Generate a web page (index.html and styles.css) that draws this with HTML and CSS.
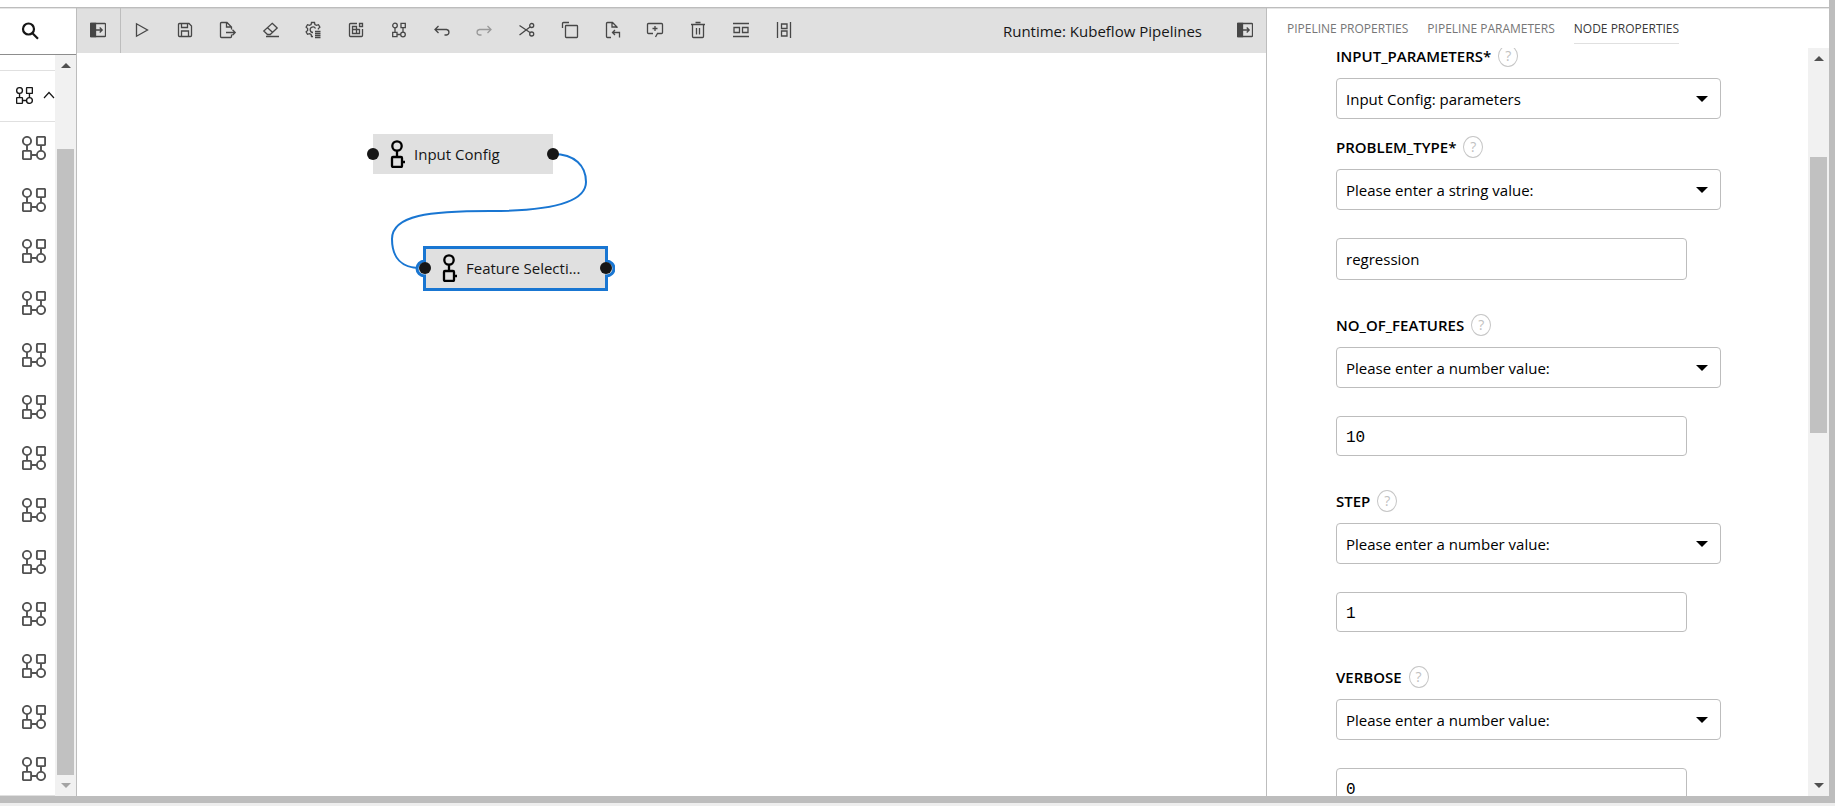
FILE: index.html
```html
<!DOCTYPE html>
<html lang="en">
<head>
<meta charset="utf-8">
<title>Pipeline Editor</title>
<link rel="stylesheet" href="styles.css">
</head>
<body>
<svg class="defs" aria-hidden="true">
  <symbol id="flow" viewBox="0 0 24 24"><g fill="none" stroke="currentColor" stroke-width="1.9"><circle cx="5" cy="5" r="4.1"/><rect x="14.9" y="0.9" width="8.2" height="8.2" rx="0.8"/><rect x="0.9" y="14.9" width="8.2" height="8.2" rx="0.8"/><circle cx="19" cy="19" r="4.1"/><path d="M5 9v6M19 9v6M9 19h6"/></g></symbol>
  <symbol id="panel" viewBox="0 0 16 16"><rect x="0.5" y="1.5" width="15" height="13" rx="0.8" fill="none" stroke="currentColor" stroke-width="1.300"/><path d="M0.5 1.5h5v13h-5z" fill="currentColor"/><path d="M5 8h7M9.7 5.5L12.2 8l-2.500 2.500" fill="none" stroke="currentColor" stroke-width="1.300"/></symbol>
  <symbol id="node-op" viewBox="0 0 16 28"><g fill="none" stroke="currentColor" stroke-width="2.300"><circle cx="7" cy="6" r="4.700"/><path d="M7 11v6M12 22h3"/><rect x="2" y="17" width="10" height="10" rx="1"/></g></symbol>
</svg>
<div class="app">
  <div class="workspace">
    <aside class="palette">
      <button class="search" aria-label="Search"><svg width="18" height="18" viewBox="0 0 18 18" fill="none" stroke="currentColor" stroke-width="2.200"><circle cx="7.500" cy="7" r="5.500"/><path d="M11.500 11.200L17 16.700"/></svg></button>
      <div class="palette-body">
        <div class="palette-list">
          <button class="category" aria-label="Category"><svg width="17" height="17"><use href="#flow"/></svg><svg class="caret" width="12" height="8" viewBox="0 0 12 8" fill="none" stroke="currentColor" stroke-width="1.200"><path d="M1 7l5-5.500L11 7"/></svg></button>
          <ul class="ops">
            <li><svg><use href="#flow"/></svg></li><li><svg><use href="#flow"/></svg></li><li><svg><use href="#flow"/></svg></li><li><svg><use href="#flow"/></svg></li><li><svg><use href="#flow"/></svg></li><li><svg><use href="#flow"/></svg></li><li><svg><use href="#flow"/></svg></li><li><svg><use href="#flow"/></svg></li><li><svg><use href="#flow"/></svg></li><li><svg><use href="#flow"/></svg></li><li><svg><use href="#flow"/></svg></li><li><svg><use href="#flow"/></svg></li><li><svg><use href="#flow"/></svg></li>
          </ul>
        </div>
        <div class="scrollbar"><i class="up"></i><div class="track"><div class="thumb thumb-left"></div></div><i class="down muted"></i></div>
      </div>
    </aside>
    <main class="editor">
      <div class="toolbar">
        <button class="tool toggle" aria-label="Toggle palette"><svg><use href="#panel"/></svg></button>
        <div class="tools">
          <button class="tool" aria-label="Run"><svg viewBox="0 0 16 16"><path d="M2.500 1.800v12.400L13.500 8z"/></svg></button>
          <button class="tool" aria-label="Save"><svg viewBox="0 0 16 16"><path d="M1.500 2.500a1 1 0 0 1 1-1h9.500l2.500 2.500v9.500a1 1 0 0 1-1 1h-11a1 1 0 0 1-1-1zM4.500 1.500v4h6v-4M4.500 14.500v-5.500h7v5.500"/></svg></button>
          <button class="tool" aria-label="Export"><svg viewBox="0 0 16 16"><path d="M11.500 12.500v2a1 1 0 0 1-1 1h-9a1 1 0 0 1-1-1v-13a1 1 0 0 1 1-1h5.500l4.500 4.500v2.500M6.500 0.500v4.500h5M6 10.500h9M12.500 7.800l2.700 2.700-2.700 2.700"/></svg></button>
          <button class="tool" aria-label="Clear"><svg viewBox="0 0 16 16"><path d="M3 14.500h13M9.200 1.300l5 4.700-7 6.500H4.500L0.800 9zM4.500 5.700l5 4.600"/></svg></button>
          <button class="tool" aria-label="Runtimes"><svg viewBox="0 0 16 16"><path d="M10 9.500h5.500M10 11.500h5.500M10 13.500h5.500M10 15.500h5.500"/><path d="M8 14.500H6.500l-.4-2-1.600-.9-2 .7-1.400-2.500 1.500-1.400V6.600L1.100 5.200l1.400-2.500 2 .7 1.600-.9.400-2h3l.4 2 1.600.9 2-.7 1.400 2.500-1.500 1.400v.9M8 10.500A2.800 2.800 0 1 1 10.500 6.500"/></svg></button>
          <button class="tool" aria-label="Runtime images"><svg viewBox="0 0 16 16"><path d="M9 1.500H2.500a1 1 0 0 0-1 1v11a1 1 0 0 0 1 1h11a1 1 0 0 0 1-1V7M11.500 1.500h3v3h-3zM4.500 4.500h4v7h-4zM4.500 7.500h7v4h-7z"/></svg></button>
          <button class="tool" aria-label="Component catalogs"><svg viewBox="0 0 16 16"><circle cx="4" cy="3.500" r="2.300"/><path d="M10 1.300h4.300v4.300H10zM1.700 10.400h4.300v4.300H1.700zM4 5.700v4.700M12 5.700v4.700M6 12.500h3.700"/><circle cx="12" cy="12.500" r="2.300"/></svg></button>
          <button class="tool" aria-label="Undo"><svg viewBox="0 0 16 16"><path d="M4.500 4L1 7.500 4.500 11M1 7.500h11.500a3 2.800 0 0 1 0 5.500h-2"/></svg></button>
          <button class="tool" aria-label="Redo" disabled><svg viewBox="0 0 16 16"><path d="M11.500 4L15 7.500 11.500 11M15 7.500H3.500a3 2.800 0 0 0 0 5.500h2"/></svg></button>
          <button class="tool" aria-label="Cut"><svg viewBox="0 0 16 16"><path d="M0.500 3.500L11 10.500M0.500 13L11 5"/><circle cx="12.700" cy="3.500" r="2"/><circle cx="12.700" cy="12" r="2"/></svg></button>
          <button class="tool" aria-label="Copy"><svg viewBox="0 0 16 16"><path d="M0.500 6V1.500a1 1 0 0 1 1-1H7"/><rect x="3.500" y="3.500" width="12" height="12" rx="0.800"/></svg></button>
          <button class="tool" aria-label="Paste"><svg viewBox="0 0 16 16"><path d="M6 15.500H2.500a1 1 0 0 1-1-1v-13a1 1 0 0 1 1-1h5l4.500 4.500v1M7 0.500v4.500h5M10 8L7.500 10.500 10 13M7.500 10.500h7v5"/></svg></button>
          <button class="tool" aria-label="Comment"><svg viewBox="0 0 16 16"><path d="M8.500 15l2-3.500h4a1 1 0 0 0 1-1v-8a1 1 0 0 0-1-1h-13a1 1 0 0 0-1 1v8a1 1 0 0 0 1 1H6M8 4v5M5.500 6.500h5"/></svg></button>
          <button class="tool" aria-label="Delete"><svg viewBox="0 0 16 16"><path d="M1 2.500h14M5.500 0.500h5M2.500 2.500v12a1 1 0 0 0 1 1h9a1 1 0 0 0 1-1v-12M6.500 6v6.500M9.500 6v6.500"/></svg></button>
          <button class="tool" aria-label="Arrange horizontally"><svg viewBox="0 0 16 16"><path d="M0 1.500h16M0 14.500h16M1 5.500h5.500v5H1zM9.500 5.500H15v5H9.500z"/></svg></button>
          <button class="tool" aria-label="Arrange vertically"><svg viewBox="0 0 16 16"><path d="M1.500 0v16M14.500 0v16M5.500 2h5.500v4.500H5.500zM5.500 9h5.500v5H5.500z"/></svg></button>
        </div>
        <span class="runtime">Runtime: Kubeflow Pipelines</span>
        <button class="tool" aria-label="Toggle properties"><svg><use href="#panel"/></svg></button>
      </div>
      <div class="canvas">
        <svg class="edges" aria-hidden="true"><path d="M476 101C498 101 509 113 509 129C509 152 463 158 413 158C353 158 315 162 315 186C315 205 325 215 343 215"/></svg>
        <div class="node node-input">
          <i class="port port-in"></i><svg class="node-icon"><use href="#node-op"/></svg><span>Input Config</span><i class="port port-out"></i>
        </div>
        <div class="node node-feature">
          <svg class="frame" viewBox="0 0 200 46" aria-hidden="true"><path d="M9.500 15V1.500H191.500V15A7.500 7.500 0 0 1 191.500 30V43.500H9.500V30A7.500 7.500 0 0 1 9.500 15Z"/></svg>
          <i class="port port-in"></i><svg class="node-icon"><use href="#node-op"/></svg><span>Feature Selecti...</span><i class="port port-out"></i>
        </div>
      </div>
    </main>
    <aside class="properties">
      <nav class="tabs">
        <button>PIPELINE PROPERTIES</button><button>PIPELINE PARAMETERS</button><button class="active">NODE PROPERTIES</button>
      </nav>
      <div class="properties-body">
        <form class="form">
          <section class="field">
            <div class="label"><label for="params">INPUT_PARAMETERS*</label><button type="button" class="help">?</button></div>
            <div class="select"><select id="params"><option>Input Config: parameters</option></select></div>
          </section>
          <section class="field">
            <div class="label"><label for="problem">PROBLEM_TYPE*</label><button type="button" class="help">?</button></div>
            <div class="select"><select id="problem"><option>Please enter a string value:</option></select></div>
            <input type="text" value="regression" aria-label="PROBLEM_TYPE value">
          </section>
          <section class="field">
            <div class="label"><label for="features">NO_OF_FEATURES</label><button type="button" class="help">?</button></div>
            <div class="select"><select id="features"><option>Please enter a number value:</option></select></div>
            <input type="number" value="10" aria-label="NO_OF_FEATURES value">
          </section>
          <section class="field">
            <div class="label"><label for="step">STEP</label><button type="button" class="help">?</button></div>
            <div class="select"><select id="step"><option>Please enter a number value:</option></select></div>
            <input type="number" value="1" aria-label="STEP value">
          </section>
          <section class="field">
            <div class="label"><label for="verbose">VERBOSE</label><button type="button" class="help">?</button></div>
            <div class="select"><select id="verbose"><option>Please enter a number value:</option></select></div>
            <input type="number" value="0" aria-label="VERBOSE value">
          </section>
        </form>
        <div class="scrollbar"><i class="up"></i><div class="track"><div class="thumb thumb-right"></div></div><i class="down"></i></div>
      </div>
    </aside>
  </div>
</div>
</body>
</html>
```
FILE: styles.css
```css
* { box-sizing: border-box; }
body {
  margin: 0;
  height: 100vh;
  overflow: hidden;
  background: #eee;
  color: #161616;
  font-family: "Open Sans", "Noto Sans", sans-serif;
  font-size: 15px;
}
button {
  margin: 0;
  padding: 0;
  border: 0;
  background: none;
  color: inherit;
  font: inherit;
}
.defs { display: none; }
.app {
  height: calc(100vh - 3px);
  padding-top: 7px;
  border: solid #bdbdbd;
  border-width: 0 6px 7px 0;
  background: #fff;
}
.workspace {
  display: flex;
  height: 100%;
  border-top: 1px solid #bdbdbd;
  box-shadow: inset 0 1px #e6e6e6;
}

/* palette */
.palette {
  display: flex;
  flex-direction: column;
  width: 77px;
  border-right: 1px solid #bdbdbd;
}
.search {
  flex: none;
  height: 47px;
  padding-right: 16px;
  border-bottom: 1px solid #8d8d8d;
}
.search svg { display: block; margin: 0 auto; }
.palette-body { display: flex; flex: 1; min-height: 0; }
.palette-list {
  display: flex;
  flex-direction: column;
  flex: 1;
  padding-top: 15px;
  overflow: hidden;
  border-bottom: 1px solid #e0e0e0;
}
.category {
  display: flex;
  flex: none;
  align-items: center;
  gap: 10px;
  width: 100%;
  height: 52px;
  padding: 0 0 2px 16px;
  border: solid #e0e0e0;
  border-width: 1px 0;
}
.category svg { flex: none; }
.ops {
  display: flex;
  flex-direction: column;
  flex: 1;
  margin: 0;
  padding: 0;
  list-style: none;
  color: #525252;
}
.ops li {
  display: flex;
  flex: 1;
  align-items: center;
  padding-left: 22px;
}
.ops svg { width: 24px; height: 24px; }

/* scrollbars */
.scrollbar {
  display: flex;
  flex-direction: column;
  align-items: center;
  width: 21px;
  background: #f1f1f1;
}
.up, .down { flex: none; width: 100%; height: 21px; display: grid; place-items: center; }
.up::before, .down::before {
  content: "";
  border: 5px solid transparent;
}
.up::before { border-top: 0; border-bottom-color: #505050; }
.down::before { border-bottom: 0; border-top-color: #505050; }
.down.muted::before { border-top-color: #a3a3a3; }
.track { flex: 1; width: 17px; }
.thumb { position: relative; background: #c1c1c1; }
.thumb-left { top: 10.5%; height: 89.5%; }
.thumb-right { top: 12.5%; height: 39%; }

/* editor */
.editor { display: flex; flex-direction: column; flex: 1; min-width: 0; }
.toolbar {
  display: flex;
  align-items: center;
  height: 45px;
  background: #e0e0e0;
  box-shadow: inset 0 1px #d2d2d2;
}
.tools { display: flex; width: 684px; }
.tool {
  display: grid;
  place-items: center;
  flex: 1;
  height: 45px;
  padding-bottom: 1px;
  color: #474747;
}
.toolbar > .tool { flex: none; width: 43px; }
.toolbar > .toggle { width: 44px; padding-right: 1px; border-right: 1px solid #bdbdbd; }
.tool svg {
  width: 16px;
  height: 16px;
  overflow: visible;
  fill: none;
  stroke: currentColor;
  stroke-width: 1.3;
}
.tool:disabled { color: #999; }
.runtime { margin-left: auto; margin-right: 21px; }
.canvas { position: relative; flex: 1; overflow: hidden; }
.edges { position: absolute; inset: 0; width: 100%; height: 100%; fill: none; stroke: #1976d2; stroke-width: 2; }
.node {
  position: absolute;
  display: flex;
  align-items: center;
  gap: 8px;
  width: 180px;
  height: 40px;
  padding-left: 17px;
  background: #e0e0e0;
  white-space: nowrap;
}
.node-input { left: 296px; top: 81px; }
.node-feature { left: 348px; top: 195px; width: 181px; }
.node-icon { position: relative; width: 16px; height: 28px; flex: none; color: #000; }
.node span { position: relative; }
.frame {
  position: absolute;
  left: -10px;
  top: -2px;
  width: 200px;
  height: 46px;
  fill: #e0e0e0;
  stroke: #1976d2;
  stroke-width: 3;
}
.port {
  position: absolute;
  top: 14px;
  width: 12px;
  height: 12px;
  border-radius: 50%;
  background: #161616;
}
.port-in { left: -6px; }
.port-out { right: -6px; }

/* properties */
.properties {
  display: flex;
  flex-direction: column;
  width: 563px;
  border-left: 1px solid #bdbdbd;
}
.tabs {
  display: flex;
  flex: none;
  gap: 19px;
  height: 40px;
  padding: 4px 0 4px 20px;
  font-size: 12px;
  color: #767676;
}
.tabs button { padding-top: 2px; border-bottom: 1px solid transparent; }
.tabs .active { border-color: #e0e0e0; color: #393939; }
.properties-body { display: flex; flex: 1; min-height: 0; }
.form {
  flex: 1;
  padding: 0 87px 0 69px;
  overflow: hidden;
  color: #000;
}
.field { display: flex; flex-direction: column; margin-bottom: 34px; }
.field:first-child { margin: -3px 0 17px; }
.label {
  display: flex;
  align-items: center;
  gap: 7px;
  height: 22px;
  margin-bottom: 11px;
  font-weight: 600;
}
.help {
  width: 20px;
  height: 22px;
  border: 1px solid #c6c6c6;
  border-radius: 50%;
  color: #c1c1c1;
  font-size: 14px;
  line-height: 20px;
  font-weight: 400;
}
.select { position: relative; }
.select::after {
  content: "";
  position: absolute;
  right: 13px;
  top: 18px;
  border: 6px solid transparent;
  border-top-color: #000;
  border-bottom: 0;
  pointer-events: none;
}
select, input {
  display: block;
  width: 100%;
  height: 41px;
  margin: 0;
  padding: 0 9px;
  border: 1px solid #bdbdbd;
  border-radius: 4px;
  background: #fff;
  color: #000;
  font: 15px "Open Sans", "Noto Sans", sans-serif;
  appearance: none;
}
.field input { width: auto; height: 42px; margin: 28px 34px 0 0; }
.field input[type="number"] {
  height: 40px;
  padding-top: 3px;
  font: 16px "Liberation Mono", monospace;
  appearance: textfield;
}
```
